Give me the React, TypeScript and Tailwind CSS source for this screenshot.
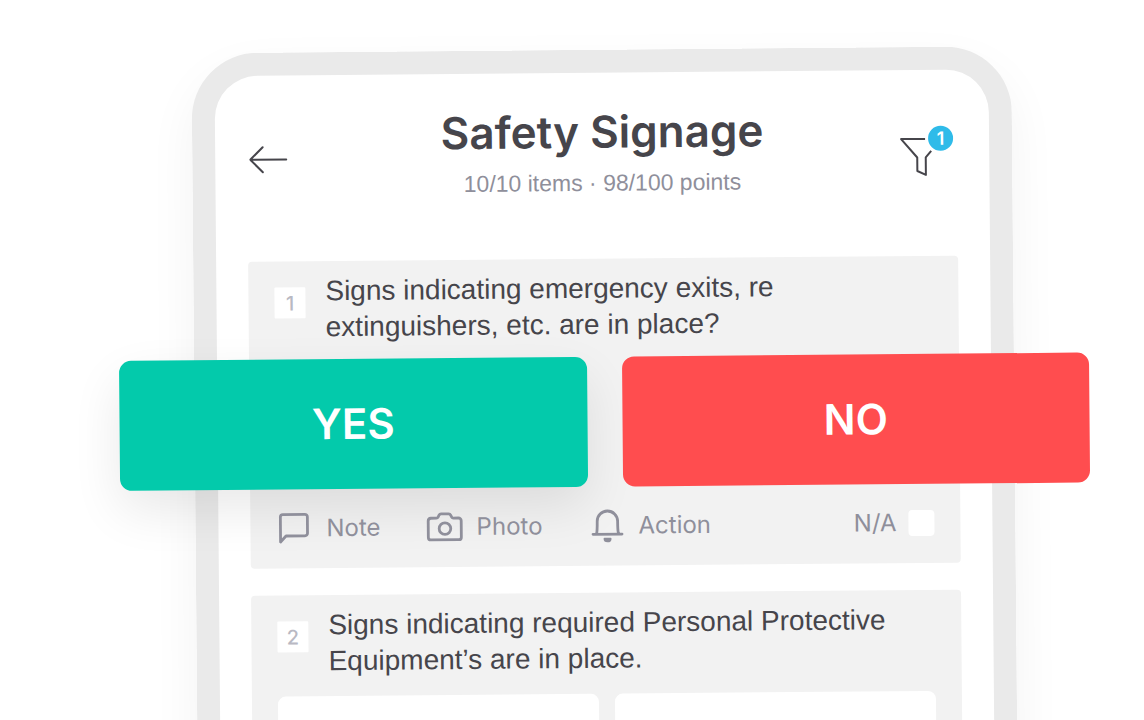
import type { ReactNode } from "react";

interface QuestionProps {
  number: number;
  text: ReactNode;
  children: ReactNode;
}

function Question({ number, text, children }: QuestionProps) {
  return (
    <section className="rounded-sm bg-[#f2f2f2] px-[26px]">
      <div className="flex h-[98px] items-start gap-5 pt-3">
        <span className="mt-3.5 flex size-[31px] shrink-0 items-center justify-center rounded-[1px] bg-white text-xl font-medium text-[#b9b9c3]">
          {number}
        </span>
        <h2 className="font-['Liberation_Sans',sans-serif] text-[28px] leading-9 whitespace-nowrap text-[#46454b]">
          {text}
        </h2>
      </div>
      {children}
    </section>
  );
}

function ActionButton({ icon, label }: { icon: ReactNode; label: string }) {
  return (
    <button type="button" className="flex items-center gap-3.5">
      {icon}
      {label}
    </button>
  );
}

const iconProps = {
  width: 36,
  height: 36,
  viewBox: "0 0 36 36",
  fill: "none",
  stroke: "currentColor",
  strokeWidth: 2.8,
  strokeLinejoin: "round",
  strokeLinecap: "round",
  "aria-hidden": true,
} as const;

const NoteIcon = () => (
  <svg {...iconProps}>
    <path d="M4 31.500V6.500a2.500 2.500 0 0 1 2.500-2.500h22a2.500 2.500 0 0 1 2.500 2.500v16.500a2.500 2.500 0 0 1-2.500 2.500H9.500z" />
  </svg>
);

const CameraIcon = () => (
  <svg {...iconProps} className="overflow-visible">
    <path d="M4.500 9h5.500q1.200 0 1.700-1l1-2q.6-1.200 2-1.200h7.600q1.400 0 2 1.200l1 2q.5 1 1.700 1h5a2.800 2.800 0 0 1 2.800 2.800v16.400a2.500 2.500 0 0 1-2.500 2.500h-28a2.500 2.500 0 0 1-2.500-2.500v-16.400a2.800 2.800 0 0 1 2.700-2.800z" />
    <circle cx="18.500" cy="19.500" r="5.800" />
  </svg>
);

const BellIcon = () => (
  <svg {...iconProps} className="overflow-visible">
    <path d="M4.500 26.500h29M8 26c.8-2 .8-5 .8-12.500a10.200 10.200 0 0 1 20.400 0c0 7.500 0 10.500.8 12.500" />
    <path d="M16 31h6a3 2.600 0 0 1-6 0z" fill="currentColor" strokeWidth="2" />
  </svg>
);

export default function App() {
  return (
    <div className="h-screen overflow-hidden bg-white font-['Inter',sans-serif]">
      <div className="flex h-full -rotate-[0.5deg] items-start justify-center pt-[50px] pl-16">
        <main className="w-full max-w-[820px] rounded-t-[66px] border-[23px] border-b-0 border-[#eaeaea] bg-white px-8 shadow-[0_20px_50px_rgba(0,0,0,0.05)]">
          <header className="grid h-[186px] grid-cols-[1fr_auto_1fr] items-start">
            <button type="button" aria-label="Back" className="mt-[69px] justify-self-start pl-0.5 text-[#46454b]">
              <svg width="40" height="30" viewBox="0 0 40 30" fill="none" stroke="currentColor" strokeWidth="2" strokeLinecap="round" strokeLinejoin="round">
                <path d="M37 15H1M13.500 2.500L1 15l12.500 12.500" />
              </svg>
            </button>
            <div className="pt-[30px] text-center">
              <h1 className="text-[44px] leading-[58px] font-semibold text-[#46454b]">Safety Signage</h1>
              <p className="mt-1.5 font-['Liberation_Sans',sans-serif] text-[23px] leading-8 text-[#8f8f9b]">
                10/10 items · 98/100 points
              </p>
            </div>
            <button type="button" aria-label="Filter" className="relative mt-[65px] mr-3.5 justify-self-end text-[#46454b]">
              <svg width="42" height="42" viewBox="0 0 42 42" fill="none" stroke="currentColor" strokeWidth="2" strokeLinejoin="round" className="overflow-visible">
                <path d="M24 4H0L16 22.500v13.500l8.500 4V22.500l5.500-6.500" />
              </svg>
              <span className="absolute -top-[9px] left-[27px] flex size-[25px] items-center justify-center rounded-full bg-[#2fbbe9] text-lg font-semibold text-white">
                1
              </span>
            </button>
          </header>

          <div className="flex flex-col gap-[27px]">
            <Question
              number={1}
              text={
                <>
                  Signs indicating emergency exits, re
                  <br />
                  extinguishers, etc. are in place?
                </>
              }
            >
              {/* answer buttons reach out past the phone on both sides */}
              <div className="-mx-[156px] grid grid-cols-2 gap-[35px] text-[42px] font-semibold text-white">
                <button type="button" className="h-[130px] rounded-xl bg-[#03caab] pb-0.5 shadow-[0_20px_50px_rgba(0,0,0,0.09)]">
                  YES
                </button>
                <button type="button" className="h-[130px] rounded-xl bg-[#ff4d4f] pb-0.5">
                  NO
                </button>
              </div>
              <div className="flex h-[79px] items-center justify-between pb-0.5 text-2xl text-[#8f8f9b]">
                <div className="flex gap-[46px]">
                  <ActionButton icon={<NoteIcon />} label="Note" />
                  <ActionButton icon={<CameraIcon />} label="Photo" />
                  <ActionButton icon={<BellIcon />} label="Action" />
                </div>
                <label className="flex items-center gap-3">
                  N/A
                  <input type="checkbox" className="size-[26px] appearance-none rounded-sm bg-white" />
                </label>
              </div>
            </Question>

            <Question
              number={2}
              text={
                <>
                  Signs indicating required Personal Protective
                  <br />
                  Equipment’s are in place.
                </>
              }
            >
              <div className="grid grid-cols-2 gap-4 pt-[3px]">
                <button type="button" aria-label="Yes" className="h-[90px] rounded-lg bg-white" />
                <button type="button" aria-label="No" className="h-[90px] rounded-lg bg-white" />
              </div>
            </Question>
          </div>
        </main>
      </div>
    </div>
  );
}
